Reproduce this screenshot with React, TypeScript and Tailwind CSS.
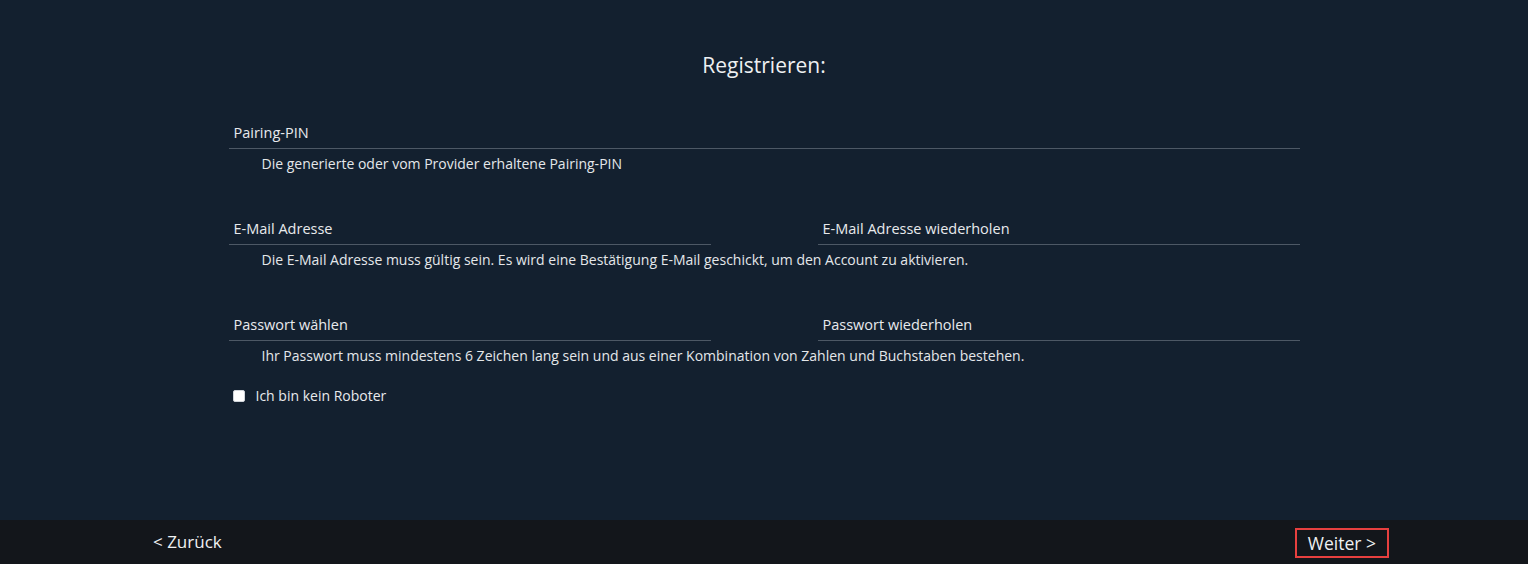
export default function App() {
  return (
    <div className="flex h-[564px] w-full flex-col bg-[#13202f] font-['Open_Sans',sans-serif] text-[#e8eaed]">
      <main className="flex-1">
        <h1 className="pt-[51px] text-center text-[21px] leading-[28px] text-[#eef0f2]">Registrieren:</h1>

        <div className="mx-auto mt-[44px] w-[1071px]">
          <Field labels={["Pairing-PIN"]} hint="Die generierte oder vom Provider erhaltene Pairing-PIN" />
          <Field
            labels={["E-Mail Adresse", "E-Mail Adresse wiederholen"]}
            hint="Die E-Mail Adresse muss gültig sein. Es wird eine Bestätigung E-Mail geschickt, um den Account zu aktivieren."
          />
          <Field
            labels={["Passwort wählen", "Passwort wiederholen"]}
            hint="Ihr Passwort muss mindestens 6 Zeichen lang sein und aus einer Kombination von Zahlen und Buchstaben bestehen."
          />

          <label className="mt-[-24px] flex items-center gap-[11px] pl-[4px] text-[14px] leading-[18px]">
            <span className="h-[12px] w-[12px] rounded-[2px] border border-[#cfd4da] bg-white" />
            Ich bin kein Roboter
          </label>
        </div>
      </main>

      <footer className="flex h-[44px] items-center justify-between bg-[#13161b] px-[139px]">
        <button className="h-[30px] border-2 border-transparent px-[12px] text-[17px] leading-[22px] text-[#eef0f2]">
          &lt; Zurück
        </button>
        <button className="mt-[2px] h-[30px] border-2 border-[#e8403f] px-[11px] text-[17.5px] leading-[22px] text-[#eef0f2]">
          Weiter &gt;
        </button>
      </footer>
    </div>
  );
}

function Field({ labels, hint }: { labels: string[]; hint: string }) {
  return (
    <div className="mb-[46px]">
      <div className="flex justify-between">
        {labels.map((l) => (
          <div
            key={l}
            className={`${labels.length === 1 ? "w-full" : "w-[482px]"} border-b border-[#4d5865] pb-[5px] pl-[5px] text-[14.5px] leading-[20px]`}
          >
            {l}
          </div>
        ))}
      </div>
      <p className="mt-[6px] pl-[33px] text-[14px] leading-[18px] text-[#e4e7ea]">{hint}</p>
    </div>
  );
}
